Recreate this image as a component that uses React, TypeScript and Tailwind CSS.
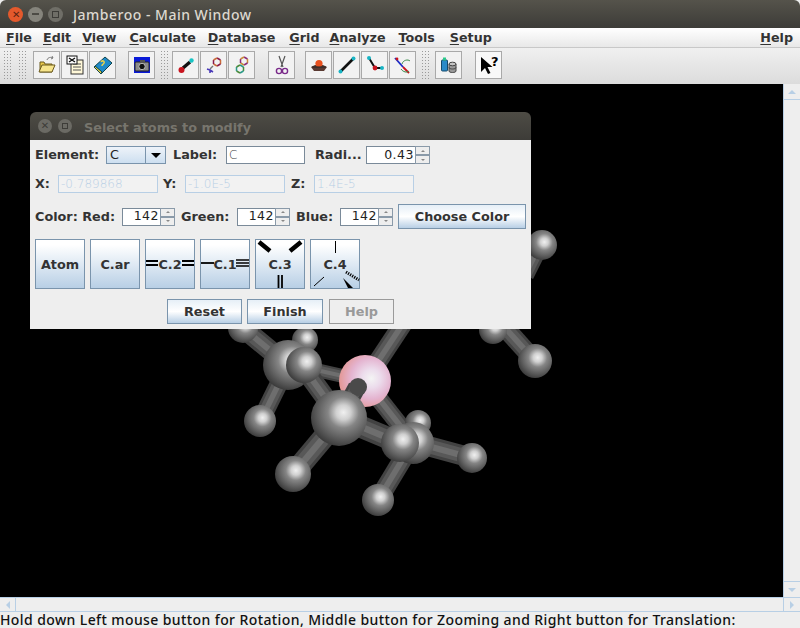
import React from "react";

const dejavu = "font-['DejaVu_Sans',sans-serif]";

function Grip({ cls = "" }: { cls?: string }) {
  return <div className={`h-[29px] w-[10px] shrink-0 bg-[radial-gradient(#9a9a9a_0.7px,transparent_0.8px)] bg-[length:3px_3px] ${cls}`} />;
}

function Tool({ children, cls = "" }: { children: React.ReactNode; cls?: string }) {
  return (
    <div className={`flex h-[28px] w-[27px] shrink-0 items-center justify-center border border-[#a9a9a9] bg-[#f2f2f2] ${cls}`}>
      <svg width="22" height="22" viewBox="0 0 22 22">{children}</svg>
    </div>
  );
}

function Hex({ x, y, a, b }: { x: number; y: number; a: string; b: string }) {
  return (
    <g fill="none" strokeWidth="1.5">
      <path d={`M${x} ${y - 4}L${x + 3.5} ${y - 2}`} stroke={a} />
      <path d={`M${x + 3.5} ${y - 2}V${y + 2}`} stroke={b} />
      <path d={`M${x + 3.5} ${y + 2}L${x} ${y + 4}`} stroke={a} />
      <path d={`M${x} ${y + 4}L${x - 3.5} ${y + 2}`} stroke={b} />
      <path d={`M${x - 3.5} ${y + 2}V${y - 2}`} stroke={a} />
      <path d={`M${x - 3.5} ${y - 2}L${x} ${y - 4}`} stroke={b} />
    </g>
  );
}

function Toolbar() {
  return (
    <div className="flex h-[36px] items-center bg-gradient-to-b from-[#f0f0f0] to-[#dcdcdc] pb-[3px] pl-[3px]">
      <Grip />
      <Grip cls="ml-[5px]" />
      <Tool cls="ml-[5px]">
        <path d="M4 8h4l1 2h7v8H4z" fill="#e8c84a" stroke="#6b5a1e" />
        <path d="M3 18l3-7h13l-3 7z" fill="#f7e58c" stroke="#6b5a1e" />
        <path d="M11 6c1-3 4-3 6-2l-1-2m1 2l-2 1" fill="none" stroke="#777" />
      </Tool>
      <Tool cls="ml-[1px]">
        <rect x="7" y="6" width="12" height="14" fill="#fff8d8" stroke="#333" />
        <path d="M9 10h8M9 13h8M9 16h8" stroke="#555" />
        <rect x="3" y="2" width="10" height="8" fill="#fff" stroke="#111" />
        <path d="M5 4l6 4M11 4l-6 4" stroke="#111" strokeWidth="1.4" />
      </Tool>
      <Tool cls="ml-[1px]">
        <path d="M2 13L13 3l7 6-11 11z" fill="#1e8ac8" stroke="#10444a" />
        <path d="M2 13l7 7 1-2-7-6z" fill="#e9d34a" stroke="#10444a" />
        <path d="M9 8c1-2 4-1 3 1s-2 1-2 3" fill="none" stroke="#e9d34a" strokeWidth="1.5" />
      </Tool>
      <Tool cls="ml-[12px]">
        <rect x="3" y="3" width="16" height="16" fill="#0a1ad8" />
        <rect x="4" y="8" width="14" height="9" rx="1" fill="#8a8a8a" stroke="#222" />
        <rect x="9" y="6" width="5" height="3" fill="#555" />
        <circle cx="11" cy="12.500" r="3.2" fill="#111" stroke="#bbb" />
      </Tool>
      <Grip cls="ml-[5px]" />
      <Tool cls="ml-[2px]">
        <path d="M8 14L15 8" stroke="#111" strokeWidth="3.4" />
        <circle cx="6.500" cy="16" r="3" fill="#c8141e" />
        <circle cx="16.500" cy="6.500" r="2.2" fill="#18c4c4" />
      </Tool>
      <Tool cls="ml-[1px]">
        <Hex x={14} y={8} a="#8a1a4a" b="#c86a3a" />
        <path d="M10 12l-3 3" stroke="#777" strokeWidth="1.4" />
        <path d="M4 15l3 1v3M7 16l3 2" stroke="#4a3ab8" strokeWidth="1.6" fill="none" />
      </Tool>
      <Tool cls="ml-[1px]">
        <Hex x={13} y={7} a="#8a2a7a" b="#c88a3a" />
        <Hex x={9} y={15} a="#2a9a8a" b="#4a8a3a" />
      </Tool>
      <Tool cls="ml-[13px]">
        <path d="M8 2l4 11M14 2l-4 11" stroke="#555" strokeWidth="1.2" />
        <circle cx="8" cy="17" r="2.6" fill="none" stroke="#7a2a8a" strokeWidth="1.4" />
        <circle cx="14" cy="17" r="2.6" fill="none" stroke="#7a2a8a" strokeWidth="1.4" />
      </Tool>
      <Tool cls="ml-[10px]">
        <path d="M3 13l4-2h8l4 2-3 4H6z" fill="#5a3a32" />
        <circle cx="11" cy="9.500" r="3.600" fill="#e8501e" />
        <path d="M4 13h14" stroke="#222" />
      </Tool>
      <Tool cls="ml-[1px]">
        <path d="M5 17L17 5" stroke="#111" strokeWidth="2.6" />
        <circle cx="4.5" cy="17.5" r="2" fill="#18b4c4" />
        <circle cx="17.5" cy="4.5" r="2" fill="#18b4c4" />
      </Tool>
      <Tool cls="ml-[1px]">
        <path d="M5 4l6 10h7" fill="none" stroke="#111" strokeWidth="2" />
        <circle cx="5" cy="4" r="2" fill="#18b4c4" />
        <circle cx="11" cy="14" r="2.4" fill="#c8141e" />
        <circle cx="18" cy="14" r="2" fill="#18b4c4" />
      </Tool>
      <Tool cls="ml-[1px]">
        <path d="M3 4l8 9" stroke="#1a2ac8" strokeWidth="1.8" />
        <path d="M11 13l6 6" stroke="#c8141e" strokeWidth="1.8" />
        <path d="M10 10c1-4 6-5 8-3M9 15c2 3 6 4 8 2" fill="none" stroke="#3a8a4a" />
        <circle cx="5" cy="5" r="1.4" fill="#c8141e" />
      </Tool>
      <Grip cls="ml-[5px]" />
      <Tool cls="ml-[4px]">
        <rect x="3.500" y="6" width="6" height="11" rx="1" fill="#2a8ac8" stroke="#164a6a" />
        <rect x="5" y="3.500" width="3" height="3" fill="#2ac88a" />
        <path d="M11 10v7c0 2 7 2 7 0v-7z" fill="#9a9a9a" stroke="#444" />
        <ellipse cx="14.500" cy="10" rx="3.500" ry="1.800" fill="#c4c4c4" stroke="#444" />
        <path d="M11 13.500c0 2 7 2 7 0" fill="none" stroke="#444" />
      </Tool>
      <Tool cls="ml-[13px] bg-[#f8f8f8]">
        <path d="M3 3v15l4-4 3 6 2.500-1-3-6h5z" fill="#000" />
        <text x="13" y="12" fontSize="13" fontWeight="700" fontFamily="DejaVu Sans" fill="#000">?</text>
      </Tool>
    </div>
  );
}

function Atom({ x, y, r, pink }: { x: number; y: number; r: number; pink?: boolean }) {
  return <circle cx={x} cy={y} r={r} fill={pink ? "url(#pink)" : "url(#ball)"} />;
}

function Stick({ a, b, w = 18 }: { a: [number, number]; b: [number, number]; w?: number }) {
  const d = `M${a[0]} ${a[1]}L${b[0]} ${b[1]}`;
  return (
    <g fill="none">
      <path d={d} stroke="#424242" strokeWidth={w} />
      <path d={d} stroke="#585858" strokeWidth={w * 0.7} />
      <path d={d} stroke="#6e6e6e" strokeWidth={w * 0.3} />
    </g>
  );
}

function Molecule() {
  return (
    <svg width="783" height="513" viewBox="0 84 783 513" className="block">
      <defs>
        <radialGradient id="ball" cx="0.58" cy="0.4" r="0.66">
          <stop offset="0" stopColor="#f0f0f0" />
          <stop offset="0.2" stopColor="#d0d0d0" />
          <stop offset="0.42" stopColor="#858585" />
          <stop offset="0.7" stopColor="#5e5e5e" />
          <stop offset="1" stopColor="#333333" />
        </radialGradient>
        <radialGradient id="pink" cx="0.62" cy="0.45" r="0.6">
          <stop offset="0" stopColor="#f4f4f4" />
          <stop offset="0.3" stopColor="#ecdcec" />
          <stop offset="0.65" stopColor="#e4b4d0" />
          <stop offset="1" stopColor="#e49a9a" />
        </radialGradient>
      </defs>
      <Stick a={[525, 275]} b={[540, 245]} w={18} />
      <Stick a={[480, 300]} b={[535, 361]} w={19} />
      <Stick a={[412, 310]} b={[365, 381]} w={19} />
      <Atom x={542} y={245} r={15} />
      <Atom x={493} y={330} r={14} />
      <Atom x={535} y={361} r={17} />
      <Stick a={[243, 328]} b={[288, 365]} w={20} />
      <Stick a={[288, 365]} b={[260, 422]} w={18} />
      <Stick a={[305, 340]} b={[288, 365]} w={14} />
      <Atom x={243} y={328} r={15} />
      <Atom x={305} y={340} r={13} />
      <Atom x={288} y={365} r={25} />
      <Atom x={260} y={421} r={16} />
      <Stick a={[303, 367]} b={[365, 381]} w={14} />
      <Stick a={[365, 381]} b={[413, 442]} w={18} />
      <Atom x={365} y={381} r={26} pink />
      <Stick a={[303, 367]} b={[340, 418]} w={20} />
      <Stick a={[357, 387]} b={[340, 418]} w={18} />
      <circle cx="358" cy="387" r="9" fill="#4a4a4a" />
      <Atom x={304} y={365} r={18} />
      <Atom x={418} y={423} r={13} />
      <Stick a={[413, 442]} b={[472, 458]} w={20} />
      <Stick a={[413, 442]} b={[378, 500]} w={19} />
      <Atom x={413} y={443} r={21} />
      <Atom x={472} y={458} r={15} />
      <Atom x={378} y={500} r={16} />
      <Stick a={[340, 418]} b={[293, 474]} w={22} />
      <Stick a={[340, 418]} b={[400, 443]} w={22} />
      <Atom x={339} y={418} r={28} />
      <Atom x={293} y={474} r={18} />
      <Atom x={400} y={443} r={19} />
    </svg>
  );
}

function Field({ w, value, disabled }: { w: string; value: string; disabled?: boolean }) {
  return (
    <div className={`flex h-[18px] items-center px-[2px] font-['DejaVu_Sans',sans-serif] text-[12px] font-light leading-none ${w} ${disabled ? "border border-[#b8cfe5] bg-[#f2f2f2] text-[#b8cfe5]" : "border border-[#7a8a99] bg-white text-[#333]"}`}>
      {value}
    </div>
  );
}

function Spinner({ w, value }: { w: string; value: string }) {
  return (
    <div className={`flex h-[18px] shrink-0 ${w}`}>
      <div className="flex min-w-0 flex-1 items-center justify-end border-l border-t border-b border-[#7a8a99] bg-white pr-[1px] text-[12.5px] font-normal tracking-[0.5px] text-[#222]">
        {value}
      </div>
      <div className="flex w-[15px] flex-col border border-[#8a9aa9] bg-[#eeeeee] text-[#8a8a8a]">
        <div className="flex flex-1 items-center justify-center border-b-2 border-[#8a9aa9]">
          <div className="h-0 w-0 border-x-[2px] border-b-[2px] border-x-transparent border-b-[#888]" />
        </div>
        <div className="flex flex-1 items-center justify-center">
          <div className="h-0 w-0 border-x-[2px] border-t-[2px] border-x-transparent border-t-[#888]" />
        </div>
      </div>
    </div>
  );
}

function AtomBtn({ label, ml, children }: { label: string; ml: string; children?: React.ReactNode }) {
  return (
    <div className={`relative flex h-[50px] w-[50px] shrink-0 items-center justify-center border border-[#7a94ac] bg-gradient-to-b from-white from-[10%] to-[#b8cfe5] pt-[1px] text-[#333] ${ml}`}>
      <span className="relative">{label}</span>
      {children && (
        <svg width="50" height="50" viewBox="0 0 50 50" className="absolute -left-px -top-px">
          {children}
        </svg>
      )}
    </div>
  );
}

function Push({ label, w, ml, disabled }: { label: string; w: string; ml: string; disabled?: boolean }) {
  return (
    <div className={`flex h-[25px] items-center justify-center border ${w} ${ml} ${disabled ? "border-[#9a9a9a] bg-[#eeeeee] text-[#999]" : "border-[#7a94ac] bg-gradient-to-b from-[#e6eff7] via-white to-[#b8cfe5] text-[#333]"}`}>
      {label}
    </div>
  );
}

function Dialog() {
  return (
    <div className={`absolute left-[30px] top-[28px] w-[501px] ${dejavu} text-[12.8px] font-bold text-[#333]`}>
      <div className="flex h-[28px] items-center rounded-t-[6px] bg-gradient-to-b from-[#4e4c45] to-[#3d3c38] pl-[8px] pt-[3px]">
        <div className="-mt-[3px] flex h-[14px] w-[14px] items-center justify-center rounded-full bg-[#6b6a64] text-[10px] leading-none text-[#3d3c38]">✕</div>
        <div className="-mt-[3px] ml-[6px] flex h-[14px] w-[14px] items-center justify-center rounded-full bg-[#6b6a64]">
          <div className="h-[6px] w-[6px] border border-[#3d3c38]" />
        </div>
        <span className="ml-[12px] text-[#77756d]">Select atoms to modify</span>
      </div>
      <div className="h-[189px] bg-[#eeeeee] pl-[5px] pt-[6px]">
        <div className="flex h-[18px] items-center">
          <span className="w-[71px] shrink-0">Element:</span>
          <div className="flex h-[18px] w-[60px] shrink-0 border border-[#7a94ac] bg-gradient-to-b from-[#eef3f9] to-[#cddff0]">
            <div className="flex-1 pl-[3px] font-normal leading-[16px] text-[#222]">C</div>
            <div className="flex w-[20px] items-center justify-center border-l border-[#7a94ac]">
              <div className="h-0 w-0 border-x-[5px] border-t-[5px] border-x-transparent border-t-black" />
            </div>
          </div>
          <span className="ml-[7px] w-[53px] shrink-0">Label:</span>
          <Field w="w-[79px]" value="C" />
          <span className="ml-[10px] w-[51px] shrink-0">Radi...</span>
          <Spinner w="w-[64px]" value="0.43" />
        </div>
        <div className="mt-[11px] flex h-[18px] items-center">
          <span className="w-[23px] shrink-0">X:</span>
          <Field w="w-[100px]" value="-0.789868" disabled />
          <span className="ml-[5px] w-[22px] shrink-0">Y:</span>
          <Field w="w-[100px]" value="-1.0E-5" disabled />
          <span className="ml-[6px] w-[23px] shrink-0">Z:</span>
          <Field w="w-[100px]" value="1.4E-5" disabled />
        </div>
        <div className="mt-[11px] flex h-[25px] items-center">
          <span className="w-[87px] shrink-0">Color: Red:</span>
          <Spinner w="w-[53px]" value="142" />
          <span className="ml-[6px] w-[56px] shrink-0">Green:</span>
          <Spinner w="w-[53px]" value="142" />
          <span className="ml-[6px] w-[44px] shrink-0">Blue:</span>
          <Spinner w="w-[53px]" value="142" />
          <Push label="Choose Color" w="w-[128px]" ml="ml-[5px]" />
        </div>
        <div className="mt-[10px] flex">
          <AtomBtn label="Atom" ml="" />
          <AtomBtn label="C.ar" ml="ml-[5px]" />
          <AtomBtn label="C.2" ml="ml-[5px]">
            <path d="M1 22h12M1 26h12M37 22h12M37 26h12" stroke="#000" strokeWidth="1.8" />
          </AtomBtn>
          <AtomBtn label="C.1" ml="ml-[5px]">
            <path d="M1 24h13" stroke="#000" strokeWidth="1.8" />
            <path d="M36 21h13M36 24h13M36 27h13" stroke="#000" strokeWidth="1.5" />
          </AtomBtn>
          <AtomBtn label="C.3" ml="ml-[5px]">
            <path d="M4 3l11 9M46 3l-11 9" stroke="#000" strokeWidth="4.500" />
            <path d="M23.500 36v13M27 36v13" stroke="#000" strokeWidth="1.8" />
          </AtomBtn>
          <AtomBtn label="C.4" ml="ml-[5px]">
            <path d="M25.500 2v12M4 47l10-9" stroke="#000" />
            <path d="M33 39l10 10h-5z" fill="#000" />
            <path d="M36 33l13 8" stroke="#000" strokeWidth="3" strokeDasharray="1.200 1.200" />
          </AtomBtn>
        </div>
        <div className="mt-[10px] flex">
          <Push label="Reset" w="w-[75px]" ml="ml-[132px]" />
          <Push label="Finish" w="w-[76px]" ml="ml-[5px]" />
          <Push label="Help" w="w-[65px]" ml="ml-[6px]" disabled />
        </div>
      </div>
    </div>
  );
}

const U = ({ children }: { children: React.ReactNode }) => <span className="underline underline-offset-2">{children}</span>;

function Menu() {
  const items: [string, string, string][] = [
    ["F", "ile", "ml-[6px]"],
    ["E", "dit", "ml-[11px]"],
    ["V", "iew", "ml-[11px]"],
    ["C", "alculate", "ml-[13px]"],
    ["D", "atabase", "ml-[12px]"],
    ["G", "rid", "ml-[14px]"],
    ["A", "nalyze", "ml-[10px]"],
    ["T", "ools", "ml-[13px]"],
    ["S", "etup", "ml-[15px]"],
  ];
  return (
    <div className={`flex h-[20px] items-center border-b border-[#c8c8c8] bg-gradient-to-b from-white to-[#e8e8e8] ${dejavu} text-[12.7px] font-bold text-[#333]`}>
      {items.map(([a, b, m]) => (
        <span key={a + b} className={m}>
          <U>{a}</U>
          {b}
        </span>
      ))}
      <span className="ml-auto mr-[7px]">
        <U>H</U>elp
      </span>
    </div>
  );
}

export default function App() {
  return (
    <div className="flex h-[628px] w-[800px] flex-col overflow-hidden bg-[#eeeeee]">
      <div className="flex h-[28px] shrink-0 items-center rounded-t-[6px] bg-gradient-to-b from-[#55534b] to-[#3d3c38] pl-[8px]">
        <div className="flex h-[15px] w-[15px] items-center justify-center rounded-full bg-[#e4592c] text-[10px] leading-none text-[#5a2412]">✕</div>
        <div className="ml-[5px] flex h-[15px] w-[15px] items-center justify-center rounded-full bg-[#85847c]">
          <div className="h-[2px] w-[7px] bg-[#4c4b45]" />
        </div>
        <div className="ml-[5px] flex h-[15px] w-[15px] items-center justify-center rounded-full bg-[#6f6e67]">
          <div className="h-[7px] w-[7px] border border-[#3d3c38]" />
        </div>
        <span className="ml-[10px] font-['Noto_Sans',sans-serif] text-[14px] font-medium tracking-[0.5px] text-[#dcd8cf]">Jamberoo - Main Window</span>
      </div>
      <Menu />
      <Toolbar />
      <div className="flex min-h-0 flex-1">
        <div className="relative h-[513px] w-[783px] shrink-0 overflow-hidden bg-black">
          <Molecule />
          <Dialog />
        </div>
        <div className="flex h-[513px] w-[17px] flex-col justify-between border-l border-[#b8cfe5] bg-[#eeeeee]">
          <div className="flex h-[16px] items-center justify-center border-b border-[#b8cfe5]">
            <div className="h-0 w-0 border-x-[4px] border-b-[4px] border-x-transparent border-b-[#b8cfe5]" />
          </div>
          <div className="flex h-[16px] items-center justify-center border-t border-[#b8cfe5]">
            <div className="h-0 w-0 border-x-[4px] border-t-[4px] border-x-transparent border-t-[#b8cfe5]" />
          </div>
        </div>
      </div>
      <div className="flex h-[15px] shrink-0 justify-between border-y border-[#b8cfe5] bg-[#eeeeee]">
        <div className="flex w-[16px] items-center justify-center border-r border-[#b8cfe5]">
          <div className="h-0 w-0 border-y-[4px] border-r-[4px] border-y-transparent border-r-[#b8cfe5]" />
        </div>
        <div className="flex w-[17px] items-center justify-center border-l border-[#b8cfe5]">
          <div className="h-0 w-0 border-y-[4px] border-l-[4px] border-y-transparent border-l-[#b8cfe5]" />
        </div>
      </div>
      <div className="h-[16px] shrink-0 whitespace-nowrap font-['Noto_Sans',sans-serif] text-[14px] font-medium leading-[16px] tracking-[0.4px] text-[#111]">
        Hold down Left mouse button for Rotation, Middle button for Zooming and Right button for Translation:
      </div>
    </div>
  );
}
